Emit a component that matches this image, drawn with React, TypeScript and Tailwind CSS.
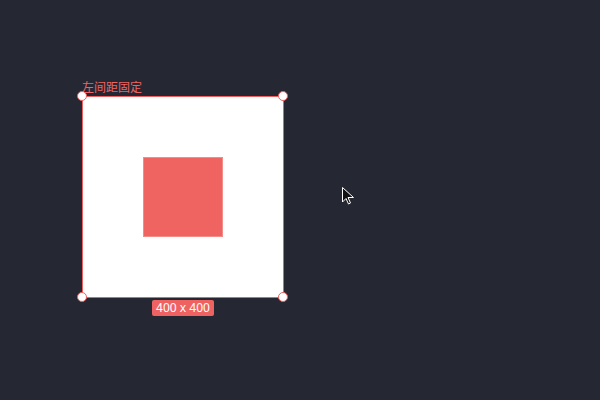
import React from "react";

function Handle({ className }: { className: string }) {
  return (
    <div
      className={`absolute w-[10px] h-[10px] rounded-full bg-white border border-[#ef5f5f] ${className}`}
    />
  );
}

export default function App() {
  return (
    <div
      className="relative w-[600px] h-[400px] bg-[#252833] overflow-hidden"
      style={{ fontFamily: '"Noto Sans CJK SC", "Noto Sans", sans-serif' }}
    >
      <div className="flex flex-col items-start pl-[82px] pt-[79px]">
        <div className="text-[12px] leading-[16px] text-[#ef6461] h-[17px]">左间距固定</div>
        <div className="relative w-[202px] h-[202px] bg-white border border-[#ef5f5f] flex items-center justify-center">
          <div className="w-[80px] h-[80px] bg-[#ef6461] border border-[#f38b88]" />
          <Handle className="-left-[6px] -top-[6px]" />
          <Handle className="-right-[5px] -top-[6px]" />
          <Handle className="-left-[6px] -bottom-[5px]" />
          <Handle className="-right-[5px] -bottom-[5px]" />
        </div>
        <div className="w-[202px] flex justify-center mt-[2px]">
          <div
            className="bg-[#ef6262] text-white text-[12px] leading-[16px] px-[4px] rounded-[2px]"
            style={{ fontFamily: '"Noto Sans", sans-serif' }}
          >
            400 x 400
          </div>
        </div>
      </div>
      <svg
        className="absolute left-[341px] top-[186px]"
        width="16"
        height="20"
        viewBox="0 0 16 20"
      >
        <path
          d="M1.5 1.5 L1.5 16 L5 12.5 L7.5 18 L9.5 17 L7 11.5 L12.5 11.5 Z"
          fill="#111"
          stroke="#fff"
          strokeWidth="1"
          strokeLinejoin="round"
        />
      </svg>
    </div>
  );
}
